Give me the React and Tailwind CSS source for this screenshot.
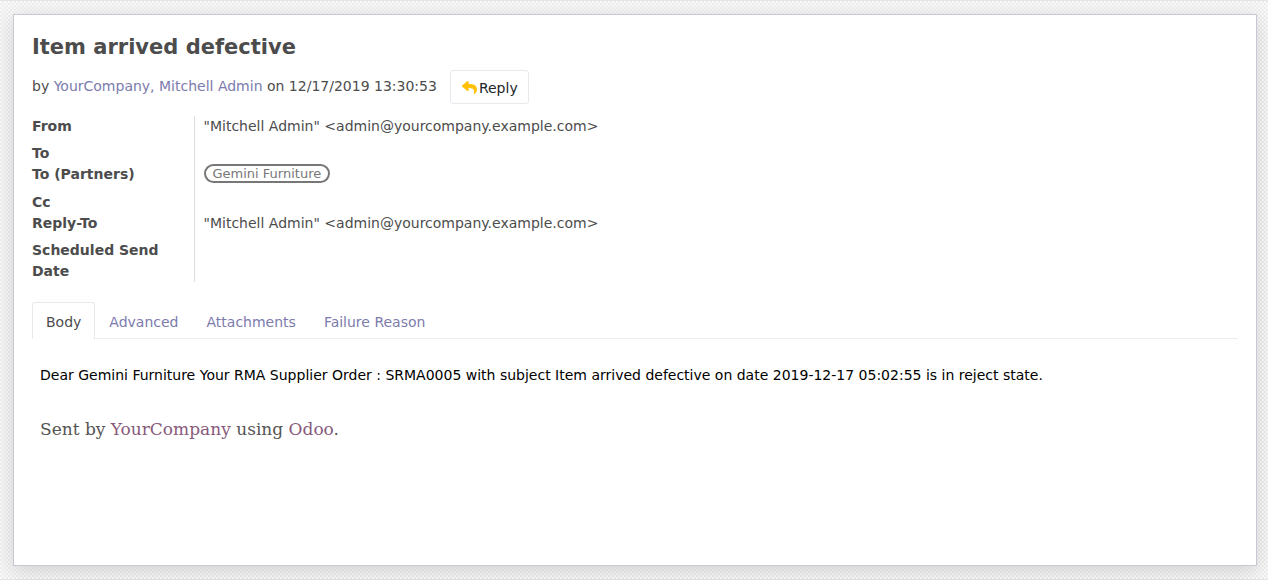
import { FaReply } from "react-icons/fa";

const EMAIL = '"Mitchell Admin" <admin@yourcompany.example.com>';

const fields = [
  { label: "From", value: EMAIL, height: "h-[27px]" },
  { label: "To", height: "h-[21px]" },
  { label: "To (Partners)", tag: "Gemini Furniture", height: "h-7" },
  { label: "Cc", height: "h-[21px]" },
  { label: "Reply-To", value: EMAIL, height: "h-[27px]" },
  { label: "Scheduled Send Date", height: "h-[42px]" },
];

const tabs = ["Body", "Advanced", "Attachments", "Failure Reason"];

function Field({ label, value, tag, height }) {
  return (
    <tr className={height}>
      <th scope="row" className="border-r border-[#dddddd] p-0 pr-4 text-left align-top font-bold">
        {label}
      </th>
      <td className="p-0 pl-[9px] align-top">
        {tag ? (
          <span className="inline-flex h-[19px] items-center rounded-full border-2 border-[#777777] px-[7px] align-top text-[13px] text-[#777777]">
            {tag}
          </span>
        ) : (
          value
        )}
      </td>
    </tr>
  );
}

export default function App() {
  return (
    <div className="flex min-h-screen flex-col border-y border-[#e2e5e9] bg-[#f9f9f9] bg-[repeating-conic-gradient(#eeeeee_0_25%,#fafafa_0_50%)] bg-[length:4px_4px] pt-[13px] pr-[11px] pb-[13px] pl-[13px] font-['DejaVu_Sans',sans-serif] text-[14px] leading-[21px] text-[#4c4c4c]">
      <main className="grow border border-[#c8c8d3] bg-white px-[18px] pt-[18px] shadow-[0_5px_20px_rgba(0,0,0,0.15)]">
        <h1 className="text-[21px] leading-7 font-bold">Item arrived defective</h1>
        <div className="mt-2 flex h-9 items-start gap-[13px]">
          <p className="pt-[7px]">
            by{" "}
            <a href="#author" className="text-[#7c7bad]">
              YourCompany, Mitchell Admin
            </a>{" "}
            on 12/17/2019 13:30:53
          </p>
          <button
            type="button"
            className="mt-px flex h-[34px] items-center rounded-[3px] border border-[#e6e9ed] bg-white pr-[10px] pl-[11px] pt-0.5 text-[#212529]"
          >
            <FaReply aria-hidden="true" className="mr-0.5 mb-0.5 size-[15px] text-[#ffc107]" />
            Reply
          </button>
        </div>

        <table className="mt-[11px] w-full table-fixed border-collapse">
          <colgroup>
            <col className="w-[162px]" />
            <col />
          </colgroup>
          <tbody>
            {fields.map((field) => (
              <Field key={field.label} {...field} />
            ))}
          </tbody>
        </table>

        <div role="tablist" className="mt-5 flex border-b border-[#eceef1]">
          {tabs.map((tab, index) => (
            <button
              key={tab}
              type="button"
              role="tab"
              aria-selected={index === 0}
              className={
                index === 0
                  ? "-mb-px h-[37px] rounded-t-[3px] border border-b-0 border-[#e6e9ed] bg-white px-[13px] pt-0.5 text-[#4c4c4c]"
                  : "h-9 px-[14px] pt-1 text-[#7c7bad]"
              }
            >
              {tab}
            </button>
          ))}
        </div>

        <section role="tabpanel" className="px-2 pt-[26px]">
          <p className="text-black">
            Dear Gemini Furniture Your RMA Supplier Order : SRMA0005 with subject Item arrived defective on date
            2019-12-17 05:02:55 is in reject state.
          </p>
          <p className="mt-[31px] font-['DejaVu_Serif',serif] text-[17px] leading-6 text-[#555555]">
            Sent by{" "}
            <a href="#company" className="text-[#875a7b]">
              YourCompany
            </a>{" "}
            using{" "}
            <a href="#odoo" className="text-[#875a7b]">
              Odoo
            </a>
            .
          </p>
        </section>
      </main>
    </div>
  );
}
